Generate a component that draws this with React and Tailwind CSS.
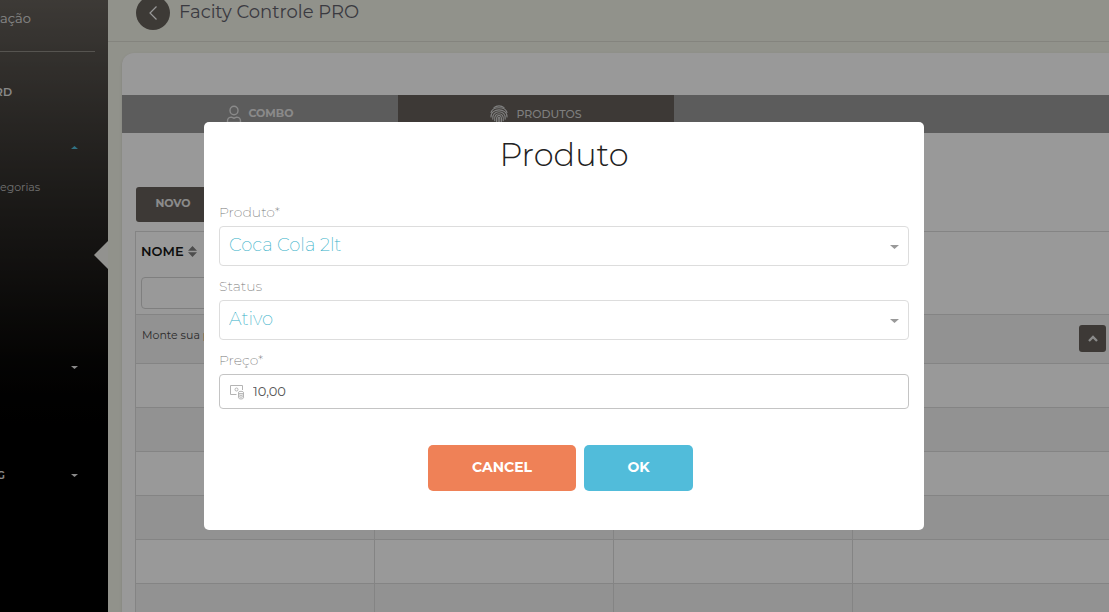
import React from "react";

function Caret({ up = false, className = "" }) {
  return (
    <svg viewBox="0 0 8 4" preserveAspectRatio="none" aria-hidden="true" className={className} fill="currentColor">
      <path d={up ? "M0 4 4 0l4 4z" : "M0 0h8L4 4z"} />
    </svg>
  );
}

function UserIcon() {
  return (
    <svg viewBox="0 0 16 18" className="h-[18px] w-4" fill="none" stroke="currentColor" strokeWidth="1.4" aria-hidden="true">
      <ellipse cx="8" cy="5.500" rx="4" ry="4.300" />
      <path d="M1.500 17.500V16c0-2.500 2-3.900 4-3.900L8 13.200l2.500-1.100c2 0 4 1.400 4 3.900v1.500z" />
    </svg>
  );
}

function FingerprintIcon() {
  return (
    <svg viewBox="0 0 18 18" className="size-[18px]" fill="none" stroke="currentColor" strokeWidth="1.150" strokeLinecap="round" aria-hidden="true">
      <path d="M4 2.600C6.800.200 11.200.200 14 2.600" />
      <path d="M1 7.500C2.800 1.200 15.200 1.200 17 7.500" />
      <path d="M1 12c-.6-9.500 16.600-9.500 16 0" />
      <path d="M2.800 14.200c-1.500-10 13.900-10 12.400 0" />
      <path d="M4.700 15.600c-1.600-9.200 10.200-9.200 8.600 0" />
      <path d="M6.500 16.800c-1.300-8.600 6.300-8.600 5 0" />
      <path d="M8.300 17.300c-.8-7 2.200-7 1.400 0" />
    </svg>
  );
}

function MoneyIcon() {
  return (
    <svg viewBox="0 0 16 16" className="h-4 w-4 shrink-0" fill="none" stroke="currentColor" aria-hidden="true">
      <path d="M7.500 10.500h-6v-9h12V6" />
      <circle cx="7.500" cy="5.500" r="1.500" />
      <ellipse cx="12" cy="8.500" rx="2.500" ry="1.200" />
      <path d="M9.500 8.500v5.300c0 1.600 5 1.600 5 0V8.500M9.500 10.200c0 1.600 5 1.600 5 0M9.500 12c0 1.600 5 1.600 5 0" />
    </svg>
  );
}

function SortIcon() {
  return (
    <svg viewBox="0 0 9 11" className="h-[11px] w-[9px] text-[#808080]" fill="currentColor" aria-hidden="true">
      <path d="M0 4.800 4.500 0 9 4.800zM0 6.200h9L4.500 11z" />
    </svg>
  );
}

function Sidebar() {
  return (
    <aside className="relative w-[108px] shrink-0 overflow-hidden bg-linear-to-b from-[#66615b] to-black to-80% text-[#e4e4e4]">
      <div className="flex h-[52px] w-[95px] items-start border-b border-[#908d86] pt-2 text-[13px] leading-5">ação</div>
      <nav className="flex flex-col pt-[13px] text-[11px]">
        <a href="#dashboard" className="flex h-[54px] items-center font-semibold">
          <span className="flex w-3 justify-end">RD</span>
        </a>
        <a href="#cadastros" aria-label="Cadastros" className="flex h-14 items-center pl-[71px] text-[#51bcda]">
          <Caret up className="h-[3px] w-[7px]" />
        </a>
        <a href="#categorias" className="flex h-6 items-center text-[#bdbdbd]">egorias</a>
        <a href="#produtos" aria-label="Produtos" className="mt-[29px] flex h-[54px] items-center justify-end">
          <svg viewBox="0 0 14 28" className="h-7 w-3.5 text-[#f4f3ef]" fill="currentColor" aria-hidden="true">
            <path d="M14 0v28L0 14z" />
          </svg>
        </a>
        <a href="#vendas" aria-label="Vendas" className="mt-[58px] flex h-[54px] items-center pl-[71px]">
          <Caret className="h-[3px] w-[7px]" />
        </a>
        <a href="#config" className="mt-[54px] flex h-[54px] items-center gap-[66px] font-semibold">
          <span className="flex w-[5px] justify-end">G</span>
          <Caret className="h-[3px] w-[7px]" />
        </a>
      </nav>
    </aside>
  );
}

function ProductTable() {
  return (
    <table className="w-full table-fixed border-collapse border border-r-0 border-[#dddddd] text-left">
      <colgroup>
        <col className="w-[239px]" />
        <col className="w-[239px]" />
        <col className="w-[239px]" />
        <col />
      </colgroup>
      <thead>
        <tr className="h-[83px]">
          <th className="border border-[#dddddd] px-[5px] pt-[11px] pb-[5px] align-top">
            <div className="flex items-center gap-1 text-[13px] leading-4 font-semibold text-[#171717]">
              NOME <SortIcon />
            </div>
            <input aria-label="Filtrar nome" className="mt-[18px] block h-8 w-full rounded border border-[#d4d4d4] px-2 text-xs" />
          </th>
          <th className="border border-[#dddddd]" />
          <th className="border border-[#dddddd]" />
          <th className="border-y border-l border-[#dddddd]" />
        </tr>
      </thead>
      <tbody>
        <tr className="h-[49px] bg-[#f3f3f3]">
          <td className="border border-[#dddddd] px-1.5 pb-2 text-[11px] whitespace-nowrap text-[#4a4a4a]">Monte sua pizza</td>
          <td className="border border-[#dddddd]" />
          <td className="border border-[#dddddd]" />
          <td className="border-y border-l border-[#dddddd]" />
        </tr>
        {[1, 2, 3, 4, 5, 6, 7].map((row) => (
          <tr key={row} className="h-11 odd:bg-[#f3f3f3] even:bg-white">
            <td className="border border-[#dddddd]" />
            <td className="border border-[#dddddd]" />
            <td className="border border-[#dddddd]" />
            <td className="border-y border-l border-[#dddddd]" />
          </tr>
        ))}
      </tbody>
    </table>
  );
}

function SelectField({ id, label, value }) {
  return (
    <div className="pt-2.5">
      <label htmlFor={id} className="mb-1 block text-sm leading-5 font-extralight text-[#777777]">{label}</label>
      <div className="relative">
        <select id={id} className="h-10 w-full appearance-none rounded border border-[#dddddd] bg-white pr-8 pb-0.5 pl-[9px] text-lg font-extralight text-[#35b0c8]">
          <option>{value}</option>
        </select>
        <Caret className="pointer-events-none absolute top-[19px] right-2.5 h-1 w-[9px] text-[#999999]" />
      </div>
    </div>
  );
}

function ProductDialog() {
  return (
    <div className="absolute inset-0 flex items-start justify-center bg-black/40 pt-[122px] pl-[19px]">
      <div role="dialog" aria-modal="true" aria-labelledby="dialog-title" className="w-[720px] rounded-[5px] bg-white px-[15px] pb-[39px]">
        <h2 id="dialog-title" className="flex h-[70px] items-center justify-center pb-1 text-[32px] leading-10 font-light text-[#222222]">Produto</h2>
        <form>
          <SelectField id="produto" label="Produto*" value="Coca Cola 2lt" />
          <SelectField id="status" label="Status" value="Ativo" />
          <div className="pt-2.5">
            <label htmlFor="preco" className="mb-1 block text-sm leading-5 font-extralight text-[#777777]">Preço*</label>
            <div className="flex h-[35px] items-center gap-2 rounded border border-[#c4c4c4] px-[9px] text-[#b4b4b4]">
              <MoneyIcon />
              <input id="preco" defaultValue="10,00" className="w-full text-[13px] text-[#555555] outline-none" />
            </div>
          </div>
          <div className="flex justify-center gap-2 pt-9 pr-[7px] text-sm font-bold text-white">
            <button type="button" className="h-[46px] w-[148px] rounded-[5px] bg-[#ef8157] pb-0.5">CANCEL</button>
            <button type="button" className="h-[46px] w-[109px] rounded-[5px] bg-[#51bcda] pb-0.5">OK</button>
          </div>
        </form>
      </div>
    </div>
  );
}

export default function App() {
  return (
    <div className="relative flex h-screen overflow-hidden bg-[#f2f3e8] font-['Montserrat','Inter',sans-serif]">
      <Sidebar />
      <main className="flex min-w-0 flex-1 flex-col">
        <header className="flex h-[42px] shrink-0 items-center gap-[9px] border-b border-[#dcdcd3] pb-[15px] pl-7">
          <button type="button" aria-label="Voltar" className="flex size-[34px] shrink-0 items-center justify-center rounded-full bg-[#66615b] text-white">
            <svg viewBox="0 0 8 14" className="h-3.5 w-2" fill="none" stroke="currentColor" strokeWidth="1.2" aria-hidden="true">
              <path d="M7.500.500 1 7l6.500 6.500" />
            </svg>
          </button>
          <h1 className="pb-0.5 text-lg leading-6 font-normal text-[#62626c]">Facity Controle PRO</h1>
        </header>
        <section className="mt-[11px] ml-3.5 flex-1 overflow-hidden rounded-tl-xl bg-white pt-[42px] shadow-sm">
          <div className="flex h-[38px] bg-[#999999] text-[11px] text-[#e6e6e6]">
            <button type="button" className="flex w-[276px] items-center justify-center gap-1.5 font-bold">
              <UserIcon />
              <span className="pb-0.5">COMBO</span>
            </button>
            <button type="button" className="flex w-[276px] items-center justify-center gap-2 bg-[#66605a] font-medium text-[#d4d4d4]">
              <FingerprintIcon />
              PRODUTOS
            </button>
          </div>
          <div className="pt-[54px] pl-[13px]">
            <button type="button" className="mb-[9px] ml-px block h-[35px] w-[74px] rounded-[3px] bg-[#66605a] pb-0.5 text-[11px] font-bold text-[#e8e8e8]">NOVO</button>
            <ProductTable />
          </div>
        </section>
      </main>
      <button type="button" aria-label="Voltar ao topo" className="absolute right-[3px] bottom-[260px] flex size-[27px] items-center justify-center rounded-[3px] bg-[#66605a] text-[#e6e6e6]">
        <svg viewBox="0 0 10 7" className="h-[7px] w-2.5" fill="none" stroke="currentColor" strokeWidth="2.300" aria-hidden="true">
          <path d="m1 6 4-4 4 4" />
        </svg>
      </button>
      <ProductDialog />
    </div>
  );
}
